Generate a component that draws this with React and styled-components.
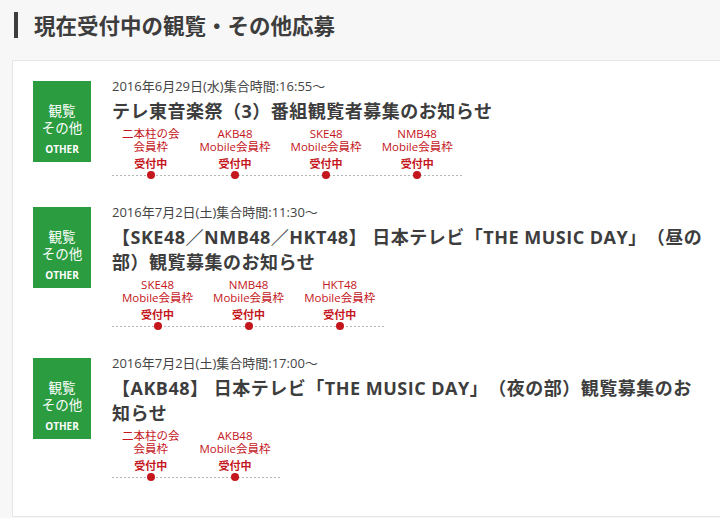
import React from "react";
import styled, { createGlobalStyle } from "styled-components";

const GlobalStyle = createGlobalStyle`
  html, body {
    margin: 0;
    padding: 0;
    background: #f7f7f7;
    font-family: "Open Sans", "Noto Sans CJK JP", sans-serif;
    color: #3d3d3d;
    overflow: hidden;
    text-spacing-trim: space-all;
  }
`;

const Page = styled.div`
  width: 720px;
  height: 518px;
  padding-top: 12px;
  box-sizing: border-box;
`;

const Heading = styled.h2`
  margin: 0 0 22px 14px;
  padding-left: 16px;
  border-left: 4px solid #3d3d3d;
  font-size: 21.5px;
  line-height: 26px;
  font-weight: 700;
  color: #3d3d3d;
  font-family: "Noto Sans CJK JP", sans-serif;
`;

const Card = styled.section`
  margin-left: 12px;
  background: #fff;
  border: 1px solid #e6e6e6;
  border-right: none;
  padding: 17px 14px 34px 20px;
  display: flex;
  flex-direction: column;
  gap: 24px;
`;

const Item = styled.article`
  display: flex;
  align-items: flex-start;
  gap: 21px;
`;

const Badge = styled.div`
  flex: 0 0 58px;
  height: 81px;
  margin-top: 3px;
  box-sizing: border-box;
  padding-top: 21px;
  background: #2b9c40;
  color: #fff;
  text-align: center;
  font-family: "Noto Sans CJK JP", sans-serif;
  font-size: 13.5px;
  line-height: 17px;
`;

const BadgeSub = styled.div`
  margin-top: 7px;
  font-family: "Open Sans", sans-serif;
  font-size: 10px;
  font-weight: 700;
  line-height: 12px;
`;

const Body = styled.div`
  flex: 1;
  min-width: 0;
`;

const DateLine = styled.div`
  font-size: 13px;
  line-height: 16px;
  color: #444;
`;

const Title = styled.h3`
  margin: 5px 0 0;
  font-size: 18px;
  line-height: 25px;
  font-weight: 700;
  letter-spacing: 0.5px;
  color: #3d3d3d;
`;

const Slots = styled.ul`
  list-style: none;
  margin: 3px 0 0;
  padding: 0;
  display: flex;
`;

const Slot = styled.li`
  display: flex;
  flex-direction: column;
  align-items: stretch;
  text-align: center;
  color: #c4161c;
  font-size: 11.5px;
  line-height: 13px;
`;

const SlotLabel = styled.div`
  padding: 0 10px;
  white-space: nowrap;
`;

const Status = styled.div`
  margin-top: 4px;
  font-weight: 700;
  font-family: "Noto Sans CJK JP", sans-serif;
  font-size: 11px;
`;

const Marker = styled.div`
  height: 10px;
  display: flex;
  align-items: center;
  justify-content: center;
  background: repeating-linear-gradient(to right, #b5b5b5 0 2px, transparent 2px 4px)
    center / 100% 1px no-repeat;
`;

const Dot = styled.span`
  width: 8px;
  height: 8px;
  border-radius: 50%;
  background: #c4161c;
`;

const events = [
  {
    date: "2016年6月29日(水)集合時間:16:55～",
    title: "テレ東音楽祭（3）番組観覧者募集のお知らせ",
    slots: [
      ["二本柱の会", "会員枠"],
      ["AKB48", "Mobile会員枠"],
      ["SKE48", "Mobile会員枠"],
      ["NMB48", "Mobile会員枠"],
    ],
  },
  {
    date: "2016年7月2日(土)集合時間:11:30～",
    title: "【SKE48／NMB48／HKT48】 日本テレビ「THE MUSIC DAY」（昼の部）観覧募集のお知らせ",
    slots: [
      ["SKE48", "Mobile会員枠"],
      ["NMB48", "Mobile会員枠"],
      ["HKT48", "Mobile会員枠"],
    ],
  },
  {
    date: "2016年7月2日(土)集合時間:17:00～",
    title: "【AKB48】 日本テレビ「THE MUSIC DAY」（夜の部）観覧募集のお知らせ",
    slots: [
      ["二本柱の会", "会員枠"],
      ["AKB48", "Mobile会員枠"],
    ],
  },
];

export default function App() {
  return (
    <Page>
      <GlobalStyle />
      <Heading>現在受付中の観覧・その他応募</Heading>
      <Card>
        {events.map((ev, i) => (
          <Item key={i}>
            <Badge>
              <div>観覧</div>
              <div>その他</div>
              <BadgeSub>OTHER</BadgeSub>
            </Badge>
            <Body>
              <DateLine>{ev.date}</DateLine>
              <Title>{ev.title}</Title>
              <Slots>
                {ev.slots.map((s, j) => (
                  <Slot key={j}>
                    <SlotLabel>
                      {s[0]}
                      <br />
                      {s[1]}
                    </SlotLabel>
                    <Status>受付中</Status>
                    <Marker>
                      <Dot />
                    </Marker>
                  </Slot>
                ))}
              </Slots>
            </Body>
          </Item>
        ))}
      </Card>
    </Page>
  );
}
